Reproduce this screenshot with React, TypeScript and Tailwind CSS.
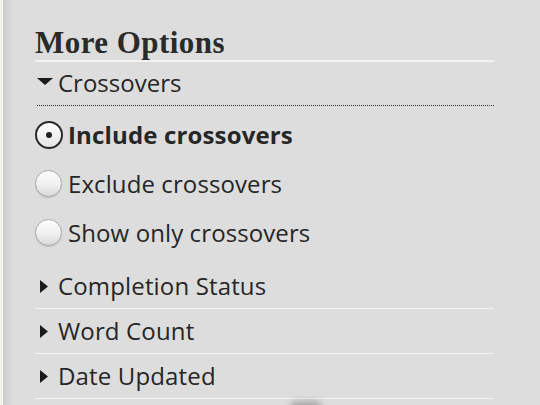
import React from "react";

const sans = { fontFamily: '"Open Sans", "Lucida Grande", "DejaVu Sans", sans-serif' };

function DownTri() {
  return (
    <svg width="16" height="7" viewBox="0 0 16 7" className="shrink-0 mb-[3px]">
      <path d="M0 0 L16 0 L8 7 Z" fill="#1a1a1a" />
    </svg>
  );
}

function RightTri() {
  return (
    <svg width="8" height="13" viewBox="0 0 8 13" className="shrink-0">
      <path d="M0 0 L8 6.5 L0 13 Z" fill="#1a1a1a" />
    </svg>
  );
}

function Radio({ checked }: { checked?: boolean }) {
  if (checked) {
    return (
      <div className="w-[28px] h-[28px] shrink-0 rounded-full border-2 border-[#2a2a2a] bg-gradient-to-b from-[#ffffff] to-[#e4e4e4] flex items-center justify-center">
        <div className="w-[6px] h-[6px] rounded-full bg-[#222]" />
      </div>
    );
  }
  return (
    <div className="w-[27px] h-[27px] shrink-0 rounded-full border border-[#a9a9a9] bg-gradient-to-b from-[#fdfdfd] via-[#f1f1f1] to-[#dadada] shadow-[0_1px_1px_rgba(0,0,0,0.15)]" />
  );
}

function RadioRow({ label, checked }: { label: string; checked?: boolean }) {
  return (
    <div className="h-[49px] flex items-center">
      <Radio checked={checked} />
      <span
        className={`${checked ? "ml-[5px] font-bold tracking-[0.15px]" : "ml-[6px] tracking-[0.1px]"} text-[24px] leading-[26px] text-[#262626]`}
        style={sans}
      >
        {label}
      </span>
    </div>
  );
}

function Collapsed({ label }: { label: string }) {
  return (
    <div className="h-[45px] flex items-center border-b border-[#f4f4f4] pl-[5px]">
      <RightTri />
      <span className="ml-[10px] text-[24px] leading-[26px] tracking-[0.15px] text-[#262626]" style={sans}>
        {label}
      </span>
    </div>
  );
}

export default function App() {
  return (
    <div className="relative w-[540px] h-[405px] overflow-hidden bg-[#dddddd] flex">
      <div className="w-[3px] h-full bg-[#f3f1ee] shrink-0" />
      <div className="w-[10px] h-full bg-gradient-to-r from-[#cdcdcd] to-[#dddddd] shrink-0" />
      <div className="ml-[22px] w-[459px] pt-[28px]">
        <div className="border-b-2 border-[#f3f3f3] pb-[2px]">
          <h2
            className="text-[31px] leading-[30px] font-bold tracking-[0.45px] text-[#2a2a2a]"
            style={{ fontFamily: '"Liberation Serif", Georgia, serif' }}
          >
            More Options
          </h2>
        </div>
        <div className="h-[44px] pt-[8px] flex items-start border-b border-dotted border-[#333333] ml-[2px]">
          <div className="flex items-center h-[26px]">
            <DownTri />
            <span className="ml-[5px] text-[24px] leading-[26px] text-[#262626]" style={sans}>
              Crossovers
            </span>
          </div>
        </div>
        <div className="pt-[4px]">
          <RadioRow label="Include crossovers" checked />
          <RadioRow label="Exclude crossovers" />
          <RadioRow label="Show only crossovers" />
        </div>
        <div className="mt-[7px]">
          <Collapsed label="Completion Status" />
          <Collapsed label="Word Count" />
          <Collapsed label="Date Updated" />
        </div>
      </div>
      <div className="absolute left-[290px] top-[401px] w-[32px] h-[14px] rounded-full bg-[#a8a8a8] blur-[3px]" />
    </div>
  );
}
